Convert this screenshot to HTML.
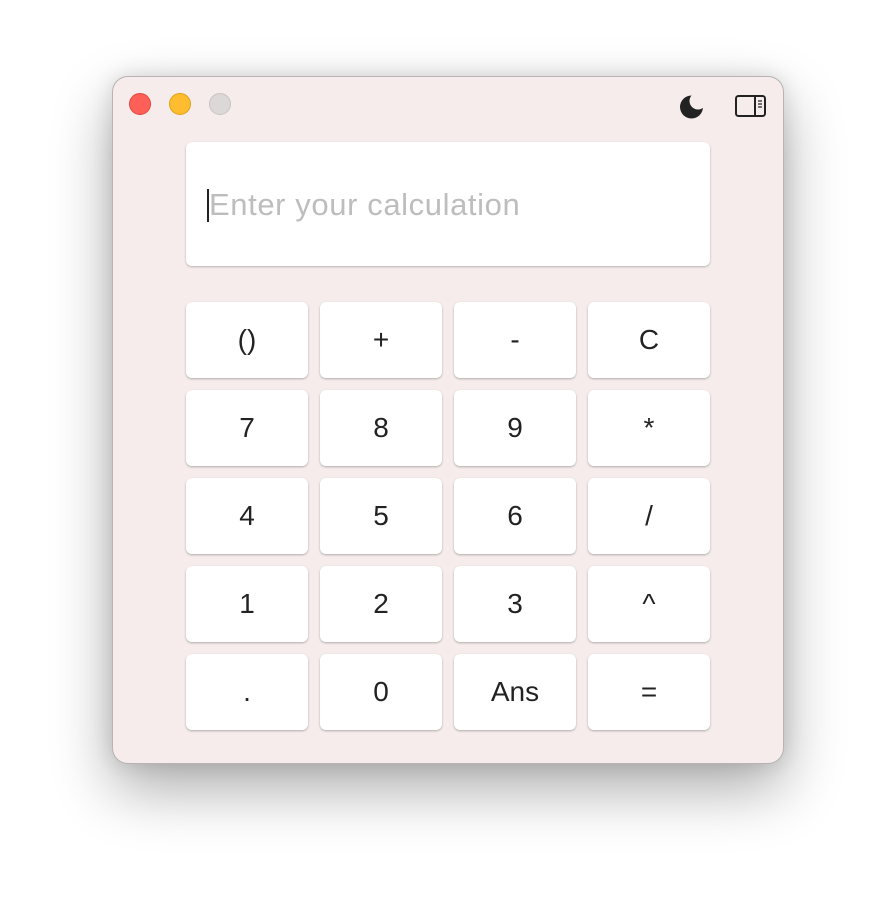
<!DOCTYPE html>
<html><head><style>
body{margin:0;width:896px;height:912px;background:#fff;font-family:"Liberation Sans",sans-serif;position:relative;overflow:hidden}
.win{position:absolute;left:112px;top:76px;width:670px;height:686px;background:#f6ecec;border:1px solid #b9b3b3;border-radius:16px;box-shadow:0 25px 60px rgba(0,0,0,.33),0 0 20px rgba(0,0,0,.12)}
.dot{position:absolute;top:16px;width:22px;height:22px;border-radius:50%;box-sizing:border-box}
.inp{position:absolute;left:73px;top:65px;width:524px;height:124px;background:#fff;border-radius:6px;box-shadow:0 1px 2px rgba(0,0,0,.25)}
.ph{position:absolute;left:23px;top:46px;font-size:31px;letter-spacing:.6px;color:#bdbdbd;line-height:34px}
.cur{position:absolute;left:21px;top:47px;width:2px;height:33px;background:#222}
.b{position:absolute;width:122px;height:76px;background:#fff;border-radius:6px;box-shadow:0 1px 2px rgba(0,0,0,.28);display:flex;align-items:center;justify-content:center;font-size:28px;color:#222}
</style></head><body>
<div class="win">
<div class="dot" style="left:16px;background:#fe5f57;border:1px solid #e2463f"></div>
<div class="dot" style="left:56px;background:#febc2e;border:1px solid #e1a116"></div>
<div class="dot" style="left:96px;background:#dcd8d7;border:1px solid #c8c3c2"></div>
<svg style="position:absolute;left:565px;top:16px" width="28" height="28" viewBox="0 0 28 28"><defs><mask id="m"><rect width="28" height="28" fill="#fff"/><circle cx="20" cy="8" r="8.5" fill="#000"/></mask></defs><circle cx="13.5" cy="14" r="11.5" fill="#222" mask="url(#m)"/></svg>
<svg style="position:absolute;left:622px;top:17px" width="32" height="24" viewBox="0 0 32 24"><rect x="1" y="2" width="29" height="20" rx="2.5" fill="none" stroke="#222" stroke-width="2"/><line x1="20" y1="2" x2="20" y2="22" stroke="#222" stroke-width="2"/><path d="M23 7h4M23 10h4M23 13h4" stroke="#222" stroke-width="1.3"/></svg>
<div class="inp"><div class="cur"></div><div class="ph">Enter your calculation</div></div>
</div>
<div id="g"></div>
<script>
var L=[["()","+","-","C"],["7","8","9","*"],["4","5","6","/"],["1","2","3","^"],[".","0","Ans","="]];
var h="";for(var r=0;r<5;r++)for(var c=0;c<4;c++)h+='<div class="b" style="left:'+(186+c*134)+'px;top:'+(302+r*88)+'px">'+L[r][c]+'</div>';
document.getElementById("g").innerHTML=h;
</script>
</body></html>
